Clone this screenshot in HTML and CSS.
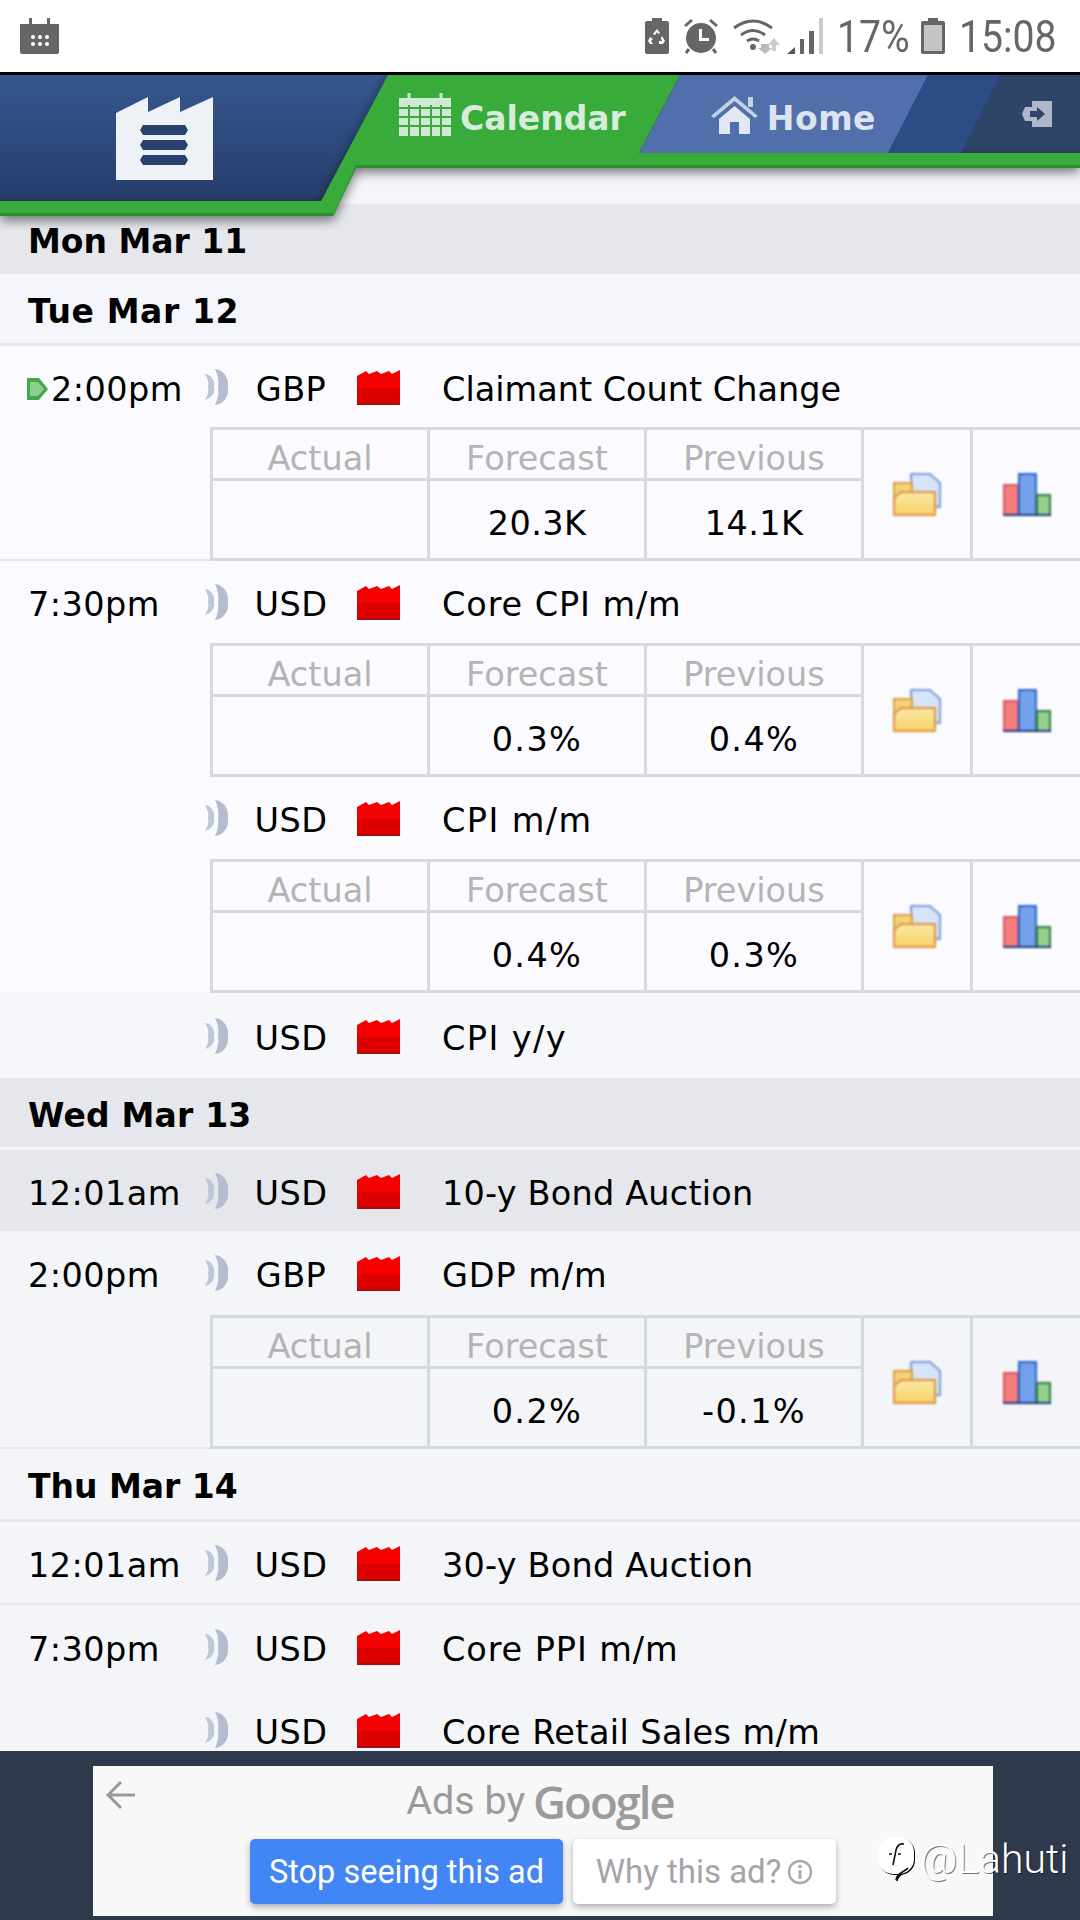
FILE: index.html
```html
<!DOCTYPE html>
<html lang="en">
<head>
    <meta charset="UTF-8">
    <meta name="viewport" content="width=device-width, initial-scale=1.0">
    <title>Calendar</title>
    <link rel="stylesheet" href="styles.css">
</head>
<body>
    <svg class="defs" width="0" height="0">
        <defs>
            <linearGradient id="logoGrad" x1="0" y1="0" x2="0" y2="1">
                <stop offset="0" stop-color="#36578f"/>
                <stop offset="1" stop-color="#243a66"/>
            </linearGradient>
            <linearGradient id="folderGrad" x1="0" y1="0" x2="0" y2="1">
                <stop offset="0" stop-color="#fce9a6"/>
                <stop offset="1" stop-color="#f6d266"/>
            </linearGradient>
            <symbol id="i-sound" viewBox="0 0 23 38">
                <path d="M0 6C7 7 10 13 9 19C10 25 7 30 0 32C3 27 4 23 3 19C4 15 3 11 0 6z" fill="#bfc7d6"/>
                <path d="M10 1C20 2 24 12 23 19C24 27 20 36 10 37C13 30 14 25 13 19C14 13 13 7 10 1z" fill="#b4bdd0"/>
            </symbol>
            <symbol id="i-factory" viewBox="0 0 43 36">
                <path d="M0 36V7L9 2 12 5 20 2 24 5 32 2 35 5 43 1V36z" fill="#f40000"/>
                <rect y="19" width="43" height="17" fill="#dc0000"/>
                <rect y="34" width="43" height="2" fill="#a01010"/>
            </symbol>
            <symbol id="i-folder" viewBox="0 0 48 43">
                <path d="M18 1H37L47 10V34H18z" fill="#d6e6fa" stroke="#7b9bd4" stroke-width="2"/>
                <path d="M1 10H19V42H1z" fill="#f3d27a" stroke="#dd9c45" stroke-width="2"/>
                <path d="M1 25L8 19H42V42H1z" fill="url(#folderGrad)" stroke="#dd9040" stroke-width="2"/>
            </symbol>
            <symbol id="i-bars" viewBox="0 0 48 43">
                <rect x="1" y="12" width="14" height="30" fill="#f67c7c" stroke="#d9565c" stroke-width="2"/>
                <rect x="16" y="1" width="17" height="41" fill="#74a2ea" stroke="#2f62c8" stroke-width="2"/>
                <rect x="34" y="22" width="13" height="20" fill="#97d08f" stroke="#2e7d3e" stroke-width="2"/>
                <rect y="41" width="48" height="2" fill="#1d3a78"/>
            </symbol>
        </defs>
    </svg>

    <div class="status-bar">
        <svg class="st-cal" viewBox="0 0 39 36"><path d="M0 6h9V0h3v6h15V0h3v6h9v28q0 2-2 2H2q-2 0-2-2z" fill="#666"/><g fill="#fff"><circle cx="13" cy="19" r="2"/><circle cx="20" cy="19" r="2"/><circle cx="27" cy="19" r="2"/><circle cx="13" cy="26" r="2"/><circle cx="20" cy="26" r="2"/><circle cx="27" cy="26" r="2"/></g></svg>
        <div class="status-right">
            <svg class="st-icon w24" viewBox="0 0 24 36"><path d="M7 0h10v3h5q2 0 2 2v29q0 2-2 2H2q-2 0-2-2V5q0-2 2-2h5z" fill="#666"/><path d="M12 11l3 4-2 1-1-2-2 3-2-1zM17 18l3 5-2 3h-4v-3h3l-1-3zM5 19l3 2-2 2 2 3H5l-2-3z" fill="#fff"/></svg>
            <svg class="st-icon w36" viewBox="0 0 36 36"><path d="M1 7l7-6 2 2-7 6zM35 7l-7-6-2 2 7 6z" fill="#666"/><circle cx="18" cy="20" r="15" fill="#666"/><path d="M6 31l-3 4M30 31l3 4" stroke="#666" stroke-width="3"/><path d="M16 11h3v9h7v3H16z" fill="#fff"/></svg>
            <svg class="st-icon w48" viewBox="0 0 48 36"><g fill="none" stroke="#666" stroke-width="3"><path d="M1 10q19-14 38 0"/><path d="M8 17q12-9 24 0"/><path d="M14 23q6-4 12 0"/></g><circle cx="20" cy="29" r="3" fill="#666"/><path d="M28 26h8v4h3l-7 6-7-6h3z" fill="#bbb"/><path d="M41 20l6 7h-4v6h-4v-6h-4z" fill="#ccc"/></svg>
            <svg class="st-icon w36 signal" viewBox="0 0 36 36"><path d="M0 36L8 29v7z" fill="#555"/><rect x="13" y="21" width="4" height="15" fill="#666"/><rect x="22" y="13" width="5" height="23" fill="#666"/><rect x="32" y="0" width="4" height="36" fill="#ccc"/></svg>
            <span class="st-text st-pct">17%</span>
            <svg class="st-icon w24" viewBox="0 0 24 36"><path d="M7 0h10v3h5q2 0 2 2v29q0 2-2 2H2q-2 0-2-2V5q0-2 2-2h5z" fill="#666"/><rect x="3" y="7" width="18" height="26" fill="#c4c4c4"/></svg>
            <span class="st-text st-time">15:08</span>
        </div>
    </div>

    <header class="topbar">
        <svg class="topbar-bg" viewBox="0 0 1080 155" width="1080" height="155">
            <rect width="1080" height="81" fill="#2e4468"/>
            <path d="M355 91L333 141H0V0H388z" fill="url(#logoGrad)"/>
            <g class="green-shape">
                <path d="M388 0H680L639 78H1080V93H356L333 141H0V126H321z" fill="#38ab3a"/>
            </g>
            <path d="M356 90H1080V93H356L333 141H0V138H334z" fill="#2b8f30"/>
            <path d="M680 0H928L888 78H639z" fill="#5170ab"/>
            <path d="M928 0H1000L961 78H888z" fill="#2c4c86"/>
        </svg>
        <div class="logo">
            <svg viewBox="0 0 97 83" width="97" height="83">
                <path d="M0 83V16L32 0V15L64 0V15L97 0V83z" fill="#eef1f6"/>
                <g fill="#2a4270"><path d="M27 28H69L72 33 69 38H27L24 33z"/><path d="M27 43H69L72 48 69 53H27L24 48z"/><path d="M27 58H69L72 63 69 68H27L24 63z"/></g>
            </svg>
        </div>
        <nav class="tabs">
            <a class="tab tab-calendar">
                <svg viewBox="0 0 52 43" width="52" height="43"><rect y="5" width="52" height="38" fill="#cfe9d3"/><g stroke="#38ab3a" stroke-width="2"><path d="M0 15H52M0 24H52M0 33H52M10 12V43M21 12V43M32 12V43M42 12V43"/></g><path d="M10 0V9M42 0V9" stroke="#cfe9d3" stroke-width="3"/></svg>
                <span class="tab-label">Calendar</span>
            </a>
            <a class="tab tab-home">
                <svg viewBox="0 0 47 39" width="47" height="39"><rect x="37" y="2" width="5" height="10" fill="#c4d0e4"/><path d="M23.5 1L47 21 44 23 23.500 6 3 23 0 21z" fill="#c4d0e4"/><path d="M8 24L23.500 11 39 24V39H28V27H19V39H8z" fill="#e1e8f3"/></svg>
                <span class="tab-label">Home</span>
            </a>
            <a class="tab-exit">
                <svg viewBox="0 0 30 26" width="30" height="26"><path d="M10 0H30V26H10V20H3L0 13 3 6H10z" fill="#aeb8c8"/><path d="M8 10H15V6L23 13 15 20V16H8z" fill="#2e4468"/></svg>
            </a>
        </nav>
    </header>

    <main class="calendar">
        <div class="day day-dark">Mon Mar 11</div>
        <div class="day day-light ls6">Tue Mar 12</div>

        <section class="event event-light has-line">
            <div class="line l81">
                <span class="time"><svg class="marker" viewBox="0 0 21 22" width="21" height="22"><path d="M0 0H12L21 11 12 22H0z" fill="#45a84c"/><path d="M3 4H11L17 11 11 18H3z" fill="#8ad08a"/></svg>2:00pm</span>
                <svg class="sound"><use href="#i-sound"/></svg>
                <span class="cur">GBP</span>
                <svg class="impact"><use href="#i-factory"/></svg>
                <span class="title">Claimant Count Change</span>
            </div>
            <table class="detail">
                <tr><th>Actual</th><th>Forecast</th><th>Previous</th>
                    <td class="ic" rowspan="2"><svg><use href="#i-folder"/></svg></td>
                    <td class="ic" rowspan="2"><svg><use href="#i-bars"/></svg></td></tr>
                <tr><td></td><td>20.3K</td><td>14.1K</td></tr>
            </table>
        </section>

        <section class="event event-light">
            <div class="line l82">
                <span class="time">7:30pm</span>
                <svg class="sound"><use href="#i-sound"/></svg>
                <span class="cur">USD</span>
                <svg class="impact"><use href="#i-factory"/></svg>
                <span class="title ls9">Core CPI m/m</span>
            </div>
            <table class="detail">
                <tr><th>Actual</th><th>Forecast</th><th>Previous</th>
                    <td class="ic" rowspan="2"><svg><use href="#i-folder"/></svg></td>
                    <td class="ic" rowspan="2"><svg><use href="#i-bars"/></svg></td></tr>
                <tr><td></td><td class="pct">0.3%</td><td class="pct">0.4%</td></tr>
            </table>
        </section>

        <section class="event event-light">
            <div class="line l82">
                <span class="time"></span>
                <svg class="sound"><use href="#i-sound"/></svg>
                <span class="cur">USD</span>
                <svg class="impact"><use href="#i-factory"/></svg>
                <span class="title ls14">CPI m/m</span>
            </div>
            <table class="detail">
                <tr><th>Actual</th><th>Forecast</th><th>Previous</th>
                    <td class="ic" rowspan="2"><svg><use href="#i-folder"/></svg></td>
                    <td class="ic" rowspan="2"><svg><use href="#i-bars"/></svg></td></tr>
                <tr><td></td><td class="pct">0.4%</td><td class="pct">0.3%</td></tr>
            </table>
        </section>

        <section class="event event-soft">
            <div class="line l85">
                <span class="time"></span>
                <svg class="sound"><use href="#i-sound"/></svg>
                <span class="cur">USD</span>
                <svg class="impact"><use href="#i-factory"/></svg>
                <span class="title ls14">CPI y/y</span>
            </div>
        </section>

        <div class="day day-dark day-wed ls2">Wed Mar 13</div>

        <section class="event event-dark">
            <div class="line l81">
                <span class="time">12:01am</span>
                <svg class="sound"><use href="#i-sound"/></svg>
                <span class="cur">USD</span>
                <svg class="impact"><use href="#i-factory"/></svg>
                <span class="title ls2">10-y Bond Auction</span>
            </div>
        </section>

        <section class="event event-mid has-line">
            <div class="line l84">
                <span class="time">2:00pm</span>
                <svg class="sound"><use href="#i-sound"/></svg>
                <span class="cur">GBP</span>
                <svg class="impact"><use href="#i-factory"/></svg>
                <span class="title ls9">GDP m/m</span>
            </div>
            <table class="detail">
                <tr><th>Actual</th><th>Forecast</th><th>Previous</th>
                    <td class="ic" rowspan="2"><svg><use href="#i-folder"/></svg></td>
                    <td class="ic" rowspan="2"><svg><use href="#i-bars"/></svg></td></tr>
                <tr><td></td><td class="pct">0.2%</td><td class="pct">-0.1%</td></tr>
            </table>
        </section>

        <div class="day day-mid">Thu Mar 14</div>

        <section class="event event-mid has-line">
            <div class="line l81">
                <span class="time">12:01am</span>
                <svg class="sound"><use href="#i-sound"/></svg>
                <span class="cur">USD</span>
                <svg class="impact"><use href="#i-factory"/></svg>
                <span class="title ls2">30-y Bond Auction</span>
            </div>
        </section>

        <section class="event event-mid">
            <div class="line l84">
                <span class="time">7:30pm</span>
                <svg class="sound"><use href="#i-sound"/></svg>
                <span class="cur">USD</span>
                <svg class="impact"><use href="#i-factory"/></svg>
                <span class="title ls9">Core PPI m/m</span>
            </div>
        </section>

        <section class="event event-mid">
            <div class="line l82">
                <span class="time"></span>
                <svg class="sound"><use href="#i-sound"/></svg>
                <span class="cur">USD</span>
                <svg class="impact"><use href="#i-factory"/></svg>
                <span class="title ls4">Core Retail Sales m/m</span>
            </div>
        </section>
    </main>

    <footer class="ad-bar">
        <div class="ad">
            <svg class="ad-back" viewBox="0 0 30 30" width="30" height="30"><path d="M29 15H3M15 2L2 15 15 28" fill="none" stroke="#999" stroke-width="3"/></svg>
            <div class="ad-title">Ads by <b>Google</b></div>
            <div class="ad-buttons">
                <a class="ad-btn ad-btn-blue">Stop seeing this ad</a>
                <a class="ad-btn ad-btn-white">Why this ad? <svg viewBox="0 0 26 26" width="26" height="26"><circle cx="13" cy="13" r="11" fill="none" stroke="#aaa" stroke-width="2.5"/><rect x="11.5" y="11" width="3" height="9" fill="#aaa"/><rect x="11.5" y="6" width="3" height="3" fill="#aaa"/></svg></a>
            </div>
        </div>
        <div class="watermark">
            <svg viewBox="0 0 36 44" width="36" height="44"><rect y="0" width="36" height="37" rx="15" fill="#fff"/><path d="M26 7c-5-1-7 2-8 6l-3 15M11 17h3M20 17h3M30 31c-2 3-12 5-12 12" fill="none" stroke="#111" stroke-width="1.600"/></svg>
            <span>@Lahuti</span>
        </div>
    </footer>
</body>
</html>
```

FILE: styles.css
```css
* {
    box-sizing: border-box;
}
html, body {
    margin: 0;
    padding: 0;
}
body {
    width: 1080px;
    height: 1920px;
    overflow: hidden;
    display: flex;
    flex-direction: column;
    font-family: "DejaVu Sans", sans-serif;
    color: #000;
    background: #f5f6fa;
}
.defs {
    position: absolute;
}

/* status bar */
.status-bar {
    height: 72px;
    flex: none;
    background: #fff;
    display: flex;
    align-items: center;
    justify-content: space-between;
    padding: 0 26px 0 20px;
}
.st-cal {
    width: 39px;
    height: 36px;
}
.status-right {
    display: flex;
    align-items: center;
    gap: 14px;
}
.st-icon {
    height: 36px;
    flex: none;
}
.w24 { width: 24px; }
.w36 { width: 36px; }
.w48 { width: 48px; }
.signal {
    margin-left: -8px;
}
.st-text {
    font-family: Roboto, sans-serif;
    font-size: 45px;
    color: #666;
    display: inline-block;
    transform: scaleX(.87);
    transform-origin: left center;
}
.st-pct { width: 70px; }
.st-time { width: 95px; }

/* header */
.topbar {
    height: 132px;
    flex: none;
    position: relative;
    z-index: 2;
    border-top: 3px solid #000;
    background: #f5f6fa;
    display: flex;
    align-items: flex-start;
}
.topbar-bg {
    position: absolute;
    left: 0;
    top: 0;
}
.green-shape {
    filter: drop-shadow(0 4px 6px rgba(0, 0, 0, .55));
}
.logo {
    position: relative;
    margin: 22px 0 0 116px;
    height: 83px;
}
.logo svg {
    display: block;
    filter: blur(.6px);
}
.tabs {
    position: relative;
    display: flex;
    align-items: center;
    height: 78px;
    margin-left: 186px;
}
.tab {
    display: flex;
    align-items: center;
    gap: 9px;
    font-weight: bold;
    font-size: 33px;
    white-space: nowrap;
}
.tab svg, .tab-exit svg {
    filter: blur(.6px);
}
.tab-label {
    margin-top: 8px;
}
.tab-calendar {
    color: #d6ecdc;
}
.tab-home {
    color: #dde4f0;
    margin-left: 85px;
    letter-spacing: .5px;
}
.tab-exit {
    margin-left: 146px;
    display: flex;
}

/* calendar rows */
.calendar {
    flex: 1;
    min-height: 0;
    overflow: hidden;
}
.day {
    height: 70px;
    padding: 5px 0 0 28px;
    display: flex;
    align-items: center;
    font-weight: bold;
    font-size: 33px;
}
.day-dark {
    background: #e5e7ec;
}
.day-wed {
    height: 72px;
    border-bottom: 3px solid #f4f5f9;
}
.day-light {
    background: #f5f6fb;
    height: 72px;
    border-bottom: 3px solid #e5e7ec;
}
.day-mid {
    background: #f4f5f9;
    height: 73px;
    border-bottom: 3px solid #e5e7ec;
}
.has-line {
    border-bottom: 2px solid #e5e7ec;
}
.has-line .detail {
    margin-bottom: -2px;
}
.event-light { background: #fbfbff; }
.event-soft { background: #f6f7fb; }
.event-mid { background: #f4f5f9; }
.event-dark { background: #e5e7ec; }
.line {
    display: flex;
    align-items: center;
    font-size: 33.5px;
    white-space: nowrap;
}
.l81 { height: 81px; }
.l82 { height: 82px; }
.l84 { height: 84px; }
.l85 { height: 85px; }
.time, .cur, .title {
    padding-top: 5px;
}
.time {
    width: 205px;
    padding-left: 28px;
    flex: none;
    display: flex;
    align-items: center;
    letter-spacing: .45px;
}
.marker {
    margin-left: -1px;
    margin-right: 3px;
    filter: blur(.5px);
}
.sound {
    width: 23px;
    height: 38px;
    flex: none;
    filter: blur(.7px);
}
.cur {
    width: 126px;
    margin-right: 3px;
    text-align: center;
    flex: none;
    letter-spacing: .4px;
}
.impact {
    width: 43px;
    height: 36px;
    flex: none;
    filter: blur(.4px);
}
.title {
    margin-left: 42px;
}

/* the reference text runs wider on some strings */
.ls2 { letter-spacing: .2px; }
.ls4 { letter-spacing: .4px; }
.ls6 { letter-spacing: .6px; }
.ls9 { letter-spacing: .9px; }
.ls14 { letter-spacing: 1.4px; }

/* actual / forecast / previous */
.detail {
    margin-left: 210px;
    width: 870px;
    table-layout: fixed;
    border-collapse: collapse;
    font-size: 33.5px;
}
.detail th, .detail td {
    border: 3px solid #d5d9e2;
    padding: 8px 0 0;
    text-align: center;
    width: 217px;
}
.detail th {
    height: 51px;
    font-weight: normal;
    color: #b4b4b4;
}
.detail tr + tr td {
    height: 80px;
    letter-spacing: .4px;
}
.detail tr + tr td.pct {
    letter-spacing: 1.4px;
}
.detail .ic {
    width: 109px;
    padding: 0;
}
.detail .ic:last-child {
    border-right: 0;
}
.ic svg {
    width: 48px;
    height: 43px;
    display: block;
    margin: 0 auto;
    filter: blur(.8px);
}

/* bottom ad */
.ad-bar {
    height: 169px;
    flex: none;
    background: #2e3a4b;
    position: relative;
    padding: 15px 87px 4px 93px;
    z-index: 3;
}
.ad {
    height: 150px;
    background: #f8f8f9;
    position: relative;
    display: flex;
    flex-direction: column;
    align-items: center;
}
.ad-back {
    position: absolute;
    left: 13px;
    top: 14px;
}
.ad-title {
    height: 69px;
    display: flex;
    align-items: center;
    gap: 8px;
    font-family: Roboto, sans-serif;
    font-size: 39.5px;
    color: #9b9b9b;
    margin: 0 6px 4px 0;
}
.ad-title b {
    font-family: "Open Sans", sans-serif;
    font-size: 45.5px;
    font-weight: 600;
    letter-spacing: -2px;
}
.ad-buttons {
    display: flex;
    gap: 10px;
    align-self: flex-start;
    margin-left: 157px;
}
.ad-btn {
    height: 65px;
    border-radius: 5px;
    display: flex;
    align-items: center;
    justify-content: center;
    gap: 6px;
    font-family: Roboto, sans-serif;
    font-size: 32.5px;
    box-shadow: 0 3px 6px rgba(0, 0, 0, .3);
}
.ad-btn-blue {
    width: 313px;
    background: #4285f4;
    color: #fff;
}
.ad-btn-white {
    width: 263px;
    background: #fff;
    color: #a4a4a8;
    font-size: 33px;
}
.watermark {
    position: absolute;
    left: 878px;
    top: 84px;
    display: flex;
    align-items: center;
    gap: 6px;
    font-family: Roboto, sans-serif;
    font-weight: 300;
    font-size: 41px;
    color: #fff;
    text-shadow: 1px 1px 0 rgba(0, 0, 0, .55);
}
.watermark svg {
    filter: drop-shadow(1px 1px 0 #000);
}
```
